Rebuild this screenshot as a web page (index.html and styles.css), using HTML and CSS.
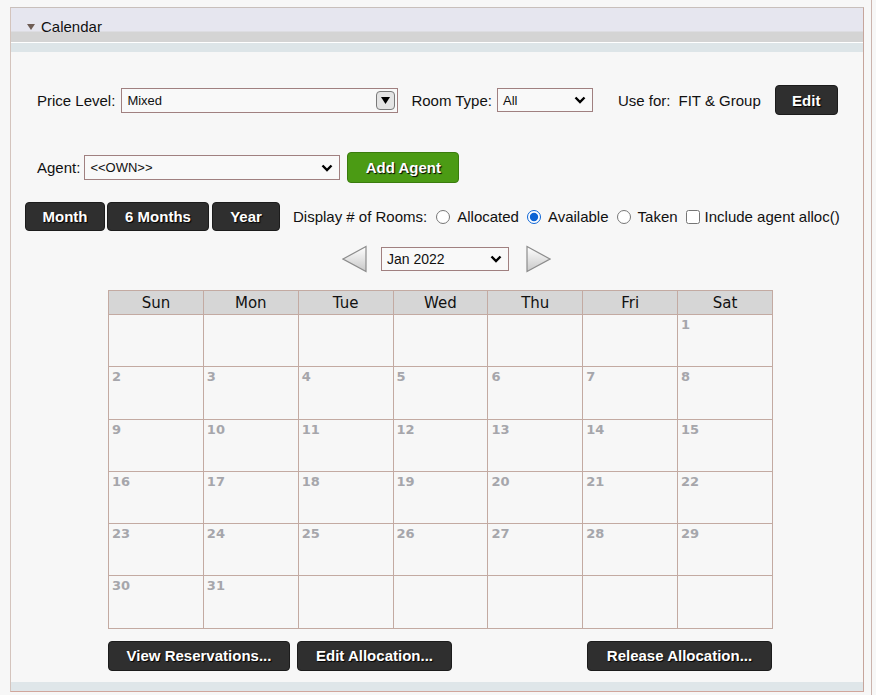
FILE: index.html
```html
<!DOCTYPE html>
<html lang="en">
<head>
  <meta charset="UTF-8" />
  <title>Calendar</title>
  <link rel="stylesheet" href="styles.css">
</head>
<body>
<div class="frame">
  <div class="panel">
    <div class="panel-head"><span class="caret"></span>Calendar</div>

    <div class="panel-body">
      <div class="row row-price">
        <span class="lbl">Price Level:</span>
        <div class="select select-price">
          <span>Mixed</span>
          <span class="drop-btn">
            <svg width="9" height="7" viewBox="0 0 9 7"><polygon points="0,0 9,0 4.5,7" fill="#000"/></svg>
          </span>
        </div>
        <span class="lbl room-lbl">Room Type:</span>
        <div class="select select-room">
          <span>All</span>
          <svg class="chev" width="12" height="8" viewBox="0 0 12 8"><polyline points="1.5,1.5 6,6 10.5,1.5" fill="none" stroke="#000" stroke-width="2.4"/></svg>
        </div>
        <span class="lbl use-lbl">Use for:</span>
        <span class="lbl use-val">FIT &amp; Group</span>
        <button class="btn btn-edit">Edit</button>
      </div>

      <div class="row row-agent">
        <span class="lbl">Agent:</span>
        <div class="select select-agent">
          <span>&lt;&lt;OWN&gt;&gt;</span>
          <svg class="chev" width="12" height="8" viewBox="0 0 12 8"><polyline points="1.5,1.5 6,6 10.5,1.5" fill="none" stroke="#000" stroke-width="2.4"/></svg>
        </div>
        <button class="btn btn-green">Add Agent</button>
      </div>

      <div class="row row-view">
        <button class="btn btn-month">Month</button>
        <button class="btn btn-six">6 Months</button>
        <button class="btn btn-year">Year</button>
        <span class="lbl display-lbl">Display # of Rooms:</span>
        <label class="opt"><input type="radio" name="disp">Allocated</label>
        <label class="opt"><input type="radio" name="disp" checked>Available</label>
        <label class="opt"><input type="radio" name="disp">Taken</label>
        <label class="opt opt-check"><input type="checkbox">Include agent alloc()</label>
      </div>

      <div class="row row-nav">
        <svg class="nav-arrow" width="26" height="28" viewBox="0 0 26 28">
          <defs>
            <linearGradient id="ag" x1="0" y1="0" x2="0" y2="1">
              <stop offset="0" stop-color="#ffffff"/>
              <stop offset="1" stop-color="#c8c8c8"/>
            </linearGradient>
          </defs>
          <polygon points="1,14 24,1.5 24,26.5" fill="url(#ag)" stroke="#8c8c8c" stroke-width="1.2"/>
        </svg>
        <div class="select select-month">
          <span>Jan 2022</span>
          <svg class="chev" width="12" height="8" viewBox="0 0 12 8"><polyline points="1.5,1.5 6,6 10.5,1.5" fill="none" stroke="#000" stroke-width="2.4"/></svg>
        </div>
        <svg class="nav-arrow nav-next" width="26" height="28" viewBox="0 0 26 28">
          <polygon points="25,14 2,1.5 2,26.5" fill="url(#ag)" stroke="#8c8c8c" stroke-width="1.2"/>
        </svg>
      </div>

      <table class="cal">
        <thead>
          <tr><th>Sun</th><th>Mon</th><th>Tue</th><th>Wed</th><th>Thu</th><th>Fri</th><th>Sat</th></tr>
        </thead>
        <tbody>
          <tr><td></td><td></td><td></td><td></td><td></td><td></td><td>1</td></tr>
          <tr><td>2</td><td>3</td><td>4</td><td>5</td><td>6</td><td>7</td><td>8</td></tr>
          <tr><td>9</td><td>10</td><td>11</td><td>12</td><td>13</td><td>14</td><td>15</td></tr>
          <tr><td>16</td><td>17</td><td>18</td><td>19</td><td>20</td><td>21</td><td>22</td></tr>
          <tr><td>23</td><td>24</td><td>25</td><td>26</td><td>27</td><td>28</td><td>29</td></tr>
          <tr><td>30</td><td>31</td><td></td><td></td><td></td><td></td><td></td></tr>
        </tbody>
      </table>

      <div class="row row-actions">
        <button class="btn btn-view">View Reservations...</button>
        <button class="btn btn-alloc">Edit Allocation...</button>
        <button class="btn btn-release">Release Allocation...</button>
      </div>
    </div>

    <div class="panel-foot"></div>
  </div>
</div>
</body>
</html>
```

FILE: styles.css
```css
html, body {
  margin: 0;
  padding: 0;
  background: #f7f7f7;
  font-family: 'Liberation Sans', Arial, sans-serif;
  color: #111;
  overflow: hidden;
}

.frame {
  width: 872px;
  height: 695px;
  border-right: 1px solid #cbb4ad;
  padding-top: 7px;
  box-sizing: border-box;
}

.panel {
  margin-left: 10px;
  width: 852px;
  border: 1px solid #d4c4bd;
  border-top-color: #c8bfbb;
  border-right-color: #c6a59c;
  border-bottom-color: #d0a69c;
  background: #f7f7f7;
}

.panel-head {
  height: 44px;
  box-sizing: border-box;
  padding: 10px 0 0 16px;
  font-size: 15px;
  line-height: 17px;
  color: #111;
  background: linear-gradient(to bottom,
    #e6e6ef 0, #e6e6ef 23px,
    #d4d4d4 24px, #d4d4d4 34px,
    #ffffff 34px, #ffffff 35px,
    #dde5e8 35px, #dde5e8 44px);
}

.caret {
  display: inline-block;
  width: 0;
  height: 0;
  border-left: 4px solid transparent;
  border-right: 4px solid transparent;
  border-top: 6px solid #6f5d55;
  margin-right: 6px;
  vertical-align: 2px;
}

.panel-body {
  padding-bottom: 11px;
}

.panel-foot {
  height: 9px;
  background: #dfe6e9;
}

.row {
  display: flex;
  align-items: center;
}

.lbl {
  font-size: 15px;
  white-space: nowrap;
}

/* selects */
.select {
  display: flex;
  align-items: center;
  justify-content: space-between;
  box-sizing: border-box;
  border: 1px solid #a08080;
  background: #f9f9f9;
  font-size: 13px;
  padding: 0 6px 0 5px;
}

.chev {
  display: block;
}

.row-price {
  margin-top: 33px;
  height: 30px;
  padding-left: 26px;
}

.select-price {
  margin-left: 6px;
  width: 277px;
  height: 25px;
  padding-right: 2px;
}

.drop-btn {
  width: 17px;
  height: 17px;
  border: 1px solid #7a7a7a;
  border-radius: 4px;
  background: #e4e4e4;
  display: flex;
  align-items: center;
  justify-content: center;
}

.room-lbl {
  margin-left: 13px;
}

.select-room {
  margin-left: 5px;
  width: 96px;
  height: 24px;
}

.use-lbl {
  margin-left: 25px;
}

.use-val {
  margin-left: 8px;
}

/* buttons */
.btn {
  font-family: 'Liberation Sans', Arial, sans-serif;
  font-size: 15px;
  font-weight: bold;
  color: #fff;
  background: #2f2f2f;
  border: 1px solid #1c1c1c;
  border-radius: 4px;
  height: 30px;
  padding: 0;
  text-shadow: 1px 1px 1px #000;
  cursor: pointer;
}

.btn-edit {
  margin-left: 14px;
  width: 63px;
}

.row-agent {
  margin-top: 37px;
  height: 31px;
  padding-left: 26px;
}

.select-agent {
  margin-left: 4px;
  width: 256px;
  height: 25px;
}

.btn-green {
  margin-left: 7px;
  width: 112px;
  height: 31px;
  background: #4b9b14;
  border-color: #3a7c0d;
}

.row-view {
  margin-top: 19px;
  height: 29px;
  padding-left: 14px;
}

.row-view .btn {
  height: 29px;
}

.btn-month { width: 80px; }
.btn-six { width: 102px; margin-left: 2px; }
.btn-year { width: 68px; margin-left: 3px; }

.display-lbl {
  margin-left: 13px;
}

.opt {
  display: flex;
  align-items: center;
  font-size: 15px;
  white-space: nowrap;
}

.opt input {
  width: 14px;
  height: 14px;
  margin: 0 7px 0 9px;
  accent-color: #0b63d4;
}

.opt + .opt input {
  margin-left: 8px;
}

.opt-check input {
  margin-left: 7px;
  margin-right: 5px;
}

.row-nav {
  margin-top: 14px;
  height: 27px;
  padding-left: 331px;
}

.nav-arrow {
  display: block;
}

.select-month {
  margin-left: 13px;
  width: 128px;
  height: 24px;
  font-size: 14px;
}

.nav-next {
  margin-left: 16px;
}

/* calendar */
.cal {
  margin: 18px 0 0 97px;
  width: 665px;
  border-collapse: collapse;
  table-layout: fixed;
  font-family: 'DejaVu Sans', Verdana, sans-serif;
}

.cal th,
.cal td {
  border: 1px solid #c3aaa2;
}

.cal th {
  background: #d6d6d6;
  font-size: 15px;
  font-weight: normal;
  color: #111;
  height: 23px;
  padding: 0;
}

.cal td {
  height: 52.3px;
  padding: 2px 0 0 3px;
  box-sizing: border-box;
  vertical-align: top;
  font-size: 13px;
  font-weight: bold;
  color: #a6a6ab;
}

.row-actions {
  margin-top: 12px;
  padding-left: 97px;
}

.btn-view { width: 182px; }
.btn-alloc { width: 155px; margin-left: 7px; }
.btn-release { width: 185px; margin-left: 135px; }
```
